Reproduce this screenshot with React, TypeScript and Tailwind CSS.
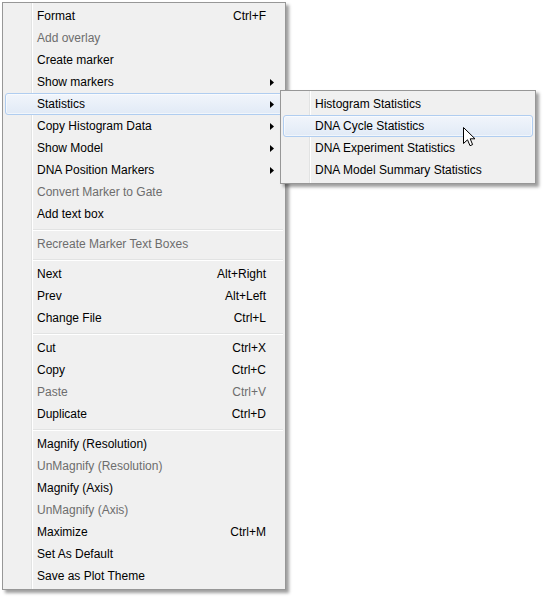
import React from "react";

type Item =
  | { sep: true }
  | { label: string; shortcut?: string; disabled?: boolean; arrow?: boolean; active?: boolean; sep?: false };

const main: Item[] = [
  { label: "Format", shortcut: "Ctrl+F" },
  { label: "Add overlay", disabled: true },
  { label: "Create marker" },
  { label: "Show markers", arrow: true },
  { label: "Statistics", arrow: true, active: true },
  { label: "Copy Histogram Data", arrow: true },
  { label: "Show Model", arrow: true },
  { label: "DNA Position Markers", arrow: true },
  { label: "Convert Marker to Gate", disabled: true },
  { label: "Add text box" },
  { sep: true },
  { label: "Recreate Marker Text Boxes", disabled: true },
  { sep: true },
  { label: "Next", shortcut: "Alt+Right" },
  { label: "Prev", shortcut: "Alt+Left" },
  { label: "Change File", shortcut: "Ctrl+L" },
  { sep: true },
  { label: "Cut", shortcut: "Ctrl+X" },
  { label: "Copy", shortcut: "Ctrl+C" },
  { label: "Paste", shortcut: "Ctrl+V", disabled: true },
  { label: "Duplicate", shortcut: "Ctrl+D" },
  { sep: true },
  { label: "Magnify (Resolution)" },
  { label: "UnMagnify (Resolution)", disabled: true },
  { label: "Magnify (Axis)" },
  { label: "UnMagnify (Axis)", disabled: true },
  { label: "Maximize", shortcut: "Ctrl+M" },
  { label: "Set As Default" },
  { label: "Save as Plot Theme" },
];

const sub: Item[] = [
  { label: "Histogram Statistics" },
  { label: "DNA Cycle Statistics", active: true },
  { label: "DNA Experiment Statistics" },
  { label: "DNA Model Summary Statistics" },
];

function Arrow() {
  return (
    <svg width="4" height="7" viewBox="0 0 4 7" className="block">
      <path d="M0 0 L4 3.5 L0 7 Z" fill="#000" />
    </svg>
  );
}

function Row({ item }: { item: Item }) {
  if (item.sep) {
    return (
      <div className="h-[8px] pl-[28px] pt-[4px]">
        <div className="h-px bg-[#e2e3e3]" />
        <div className="h-px bg-white" />
      </div>
    );
  }
  const active = item.active;
  return (
    <div
      className={
        "flex h-[22px] items-center rounded-[3px] border pl-[31px] " +
        (active
          ? "border-[#b0cdf0] bg-[linear-gradient(to_bottom,#f1f5fb,#e1eaf6)] shadow-[inset_0_0_0_1px_rgba(255,255,255,0.55)]"
          : "border-transparent") +
        (item.disabled ? " text-[#6d6d6d]" : " text-black")
      }
    >
      <span className="flex-1 whitespace-nowrap">{item.label}</span>
      {item.shortcut && <span className="whitespace-nowrap">{item.shortcut}</span>}
      <span className="flex w-[16px] pl-[4px]">{item.arrow && <Arrow />}</span>
    </div>
  );
}

function Menu({ items, className }: { items: Item[]; className: string }) {
  return (
    <div
      className={
        "border border-[#979797] p-[2px] shadow-[3px_3px_3px_rgba(0,0,0,0.38)] bg-[linear-gradient(to_right,#f0f0f0_28px,#e2e3e3_28px,#e2e3e3_29px,#ffffff_29px,#ffffff_30px,#f0f0f0_30px)] " +
        className
      }
    >
      {items.map((it, i) => (
        <Row key={i} item={it} />
      ))}
    </div>
  );
}

export default function App() {
  return (
    <div
      className="relative h-[597px] w-[543px] overflow-hidden bg-white text-[12px] leading-none"
      style={{ fontFamily: '"Liberation Sans", Arial, sans-serif' }}
    >
      <div className="pl-[2px] pt-[2px]">
        <Menu items={main} className="w-[284px]" />
      </div>
      <Menu items={sub} className="absolute left-[280px] top-[90px] w-[256px]" />
      <svg
        className="absolute left-[463px] top-[127px]"
        width="13"
        height="20"
        viewBox="0 0 13 20"
      >
        <path
          d="M0.5 0.5 L0.5 16.5 L4.5 12.8 L7 18.7 L9.6 17.6 L7.2 11.8 L12 11.8 Z"
          fill="#fff"
          stroke="#000"
          strokeWidth="1"
          strokeLinejoin="miter"
        />
      </svg>
    </div>
  );
}
